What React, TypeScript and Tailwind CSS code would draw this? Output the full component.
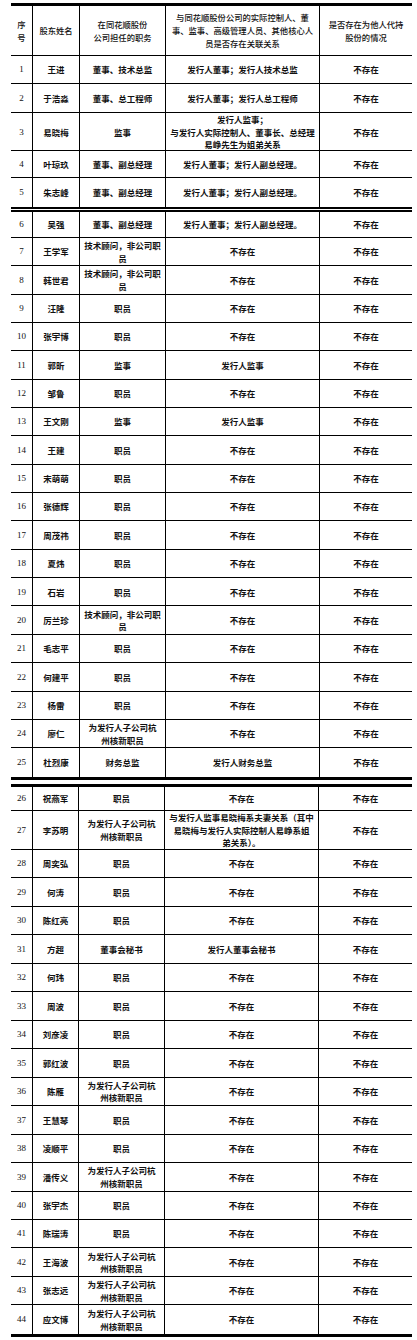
const rowsA = [
  { n: "1", name: "王进", post: "董事、技术总监", rel: "发行人董事；发行人技术总监", h: "h-[28px]" },
  { n: "2", name: "于浩淼", post: "董事、总工程师", rel: "发行人董事；发行人总工程师", h: "h-[29px]" },
  {
    n: "3",
    name: "易晓梅",
    post: "监事",
    rel: "发行人监事；\n与发行人实际控制人、董事长、总经理\n易峥先生为姐弟关系",
    h: "h-[38px]",
  },
  { n: "4", name: "叶琼玖", post: "董事、副总经理", rel: "发行人董事；发行人副总经理。", h: "h-[27px]" },
  { n: "5", name: "朱志峰", post: "董事、副总经理", rel: "发行人董事；发行人副总经理。", h: "h-[29px]" },
];

const guwen = "技术顾问，非公司职\n员";
const hexin = "为发行人子公司杭\n州核新职员";

const rowsB = [
  { n: "6", name: "吴强", post: "董事、副总经理", rel: "发行人董事；发行人副总经理。" },
  { n: "7", name: "王学军", post: guwen, rel: "不存在" },
  { n: "8", name: "韩世君", post: guwen, rel: "不存在" },
  { n: "9", name: "汪隆", post: "职员", rel: "不存在" },
  { n: "10", name: "张宇博", post: "职员", rel: "不存在" },
  { n: "11", name: "郭昕", post: "监事", rel: "发行人监事" },
  { n: "12", name: "邹鲁", post: "职员", rel: "不存在" },
  { n: "13", name: "王文刚", post: "监事", rel: "发行人监事" },
  { n: "14", name: "王建", post: "职员", rel: "不存在" },
  { n: "15", name: "宋萌萌", post: "职员", rel: "不存在" },
  { n: "16", name: "张德辉", post: "职员", rel: "不存在" },
  { n: "17", name: "周茂祎", post: "职员", rel: "不存在" },
  { n: "18", name: "夏炜", post: "职员", rel: "不存在" },
  { n: "19", name: "石岩", post: "职员", rel: "不存在" },
  { n: "20", name: "厉兰珍", post: guwen, rel: "不存在" },
  { n: "21", name: "毛志平", post: "职员", rel: "不存在" },
  { n: "22", name: "何建平", post: "职员", rel: "不存在" },
  { n: "23", name: "杨雷", post: "职员", rel: "不存在" },
  { n: "24", name: "廖仁", post: hexin, rel: "不存在" },
  { n: "25", name: "杜烈康", post: "财务总监", rel: "发行人财务总监" },
];

const rowsC = [
  { n: "26", name: "祝燕军", post: "职员", rel: "不存在" },
  {
    n: "27",
    name: "李苏明",
    post: hexin,
    rel: "与发行人监事易晓梅系夫妻关系（其中\n易晓梅与发行人实际控制人易峥系姐\n弟关系）。",
  },
  { n: "28", name: "周奕弘", post: "职员", rel: "不存在" },
  { n: "29", name: "何涛", post: "职员", rel: "不存在" },
  { n: "30", name: "陈红亮", post: "职员", rel: "不存在" },
  { n: "31", name: "方超", post: "董事会秘书", rel: "发行人董事会秘书" },
  { n: "32", name: "何玮", post: "职员", rel: "不存在" },
  { n: "33", name: "周波", post: "职员", rel: "不存在" },
  { n: "34", name: "刘彦凌", post: "职员", rel: "不存在" },
  { n: "35", name: "郭红波", post: "职员", rel: "不存在" },
  { n: "36", name: "陈雁", post: hexin, rel: "不存在" },
  { n: "37", name: "王慧琴", post: "职员", rel: "不存在" },
  { n: "38", name: "凌顺平", post: "职员", rel: "不存在" },
  { n: "39", name: "潘传义", post: hexin, rel: "不存在" },
  { n: "40", name: "张宇杰", post: "职员", rel: "不存在" },
  { n: "41", name: "陈瑞涛", post: "职员", rel: "不存在" },
  { n: "42", name: "王海波", post: hexin, rel: "不存在" },
  { n: "43", name: "张志远", post: hexin, rel: "不存在" },
  { n: "44", name: "应文博", post: hexin, rel: "不存在" },
];

const cell = "flex items-center justify-center text-center whitespace-pre-line border-r border-black";

type RowProps = {
  n: string;
  name: string;
  post: string;
  rel: string;
  h: string;
  cols: string;
  last?: boolean;
};

const Row = ({ n, name, post, rel, h, cols, last }: RowProps) => (
  <div className={`grid ${cols} ${h} ${last ? "" : "border-b border-black"}`}>
    <div className={`${cell} font-['Liberation_Serif',serif] text-[9px] font-normal`}>{n}</div>
    <div className={cell}>{name}</div>
    <div className={cell}>{post}</div>
    <div className={cell}>{rel}</div>
    <div className="flex items-center justify-center text-center">不存在</div>
  </div>
);

const colsAB = "grid-cols-[22px_47px_86px_154px_92px]";
const colsC = "grid-cols-[22px_46px_86px_154px_93px]";

export default function App() {
  return (
    <div className="min-h-[1340px] w-[417px] bg-white pt-[3px] font-['Noto_Sans_CJK_SC',sans-serif] text-[8.5px] font-semibold leading-[12.6px] text-[#111]">
      <div className="ml-[11px] w-[401px]">
        {/* first page */}
        <div className="border-t-[3px] border-black">
          <div className={`grid ${colsAB} h-[50px] border-b border-black text-[8.3px] font-medium leading-[13px]`}>
            <div className={cell}>{"序\n号"}</div>
            <div className={cell}>股东姓名</div>
            <div className={cell}>{"在同花顺股份\n公司担任的职务"}</div>
            <div className={cell}>
              {"与同花顺股份公司的实际控制人、董\n事、监事、高级管理人员、其他核心人\n员是否存在关联关系"}
            </div>
            <div className="flex items-center justify-center text-center whitespace-pre-line">
              {"是否存在为他人代持\n股份的情况"}
            </div>
          </div>
          {rowsA.map((r, i) => (
            <Row key={r.n} {...r} cols={colsAB} last={i === rowsA.length - 1} />
          ))}
        </div>
        <div className="h-[5px] border-t-2 border-b-2 border-black" />

        {/* second page */}
        <div className="border-b-[3px] border-black">
          {rowsB.map((r, i) => (
            <Row
              key={r.n}
              {...r}
              h={i === 0 ? "h-[26px]" : "h-[28.35px]"}
              cols={colsAB}
              last={i === rowsB.length - 1}
            />
          ))}
        </div>

        {/* third page */}
        <div className="mt-[4px] border-t-[3px] border-b-[3px] border-black">
          {rowsC.map((r, i) => (
            <Row
              key={r.n}
              {...r}
              h={i === 0 ? "h-[24.4px]" : i === 1 ? "h-[39px]" : "h-[28.47px]"}
              cols={colsC}
              last={i === rowsC.length - 1}
            />
          ))}
        </div>
      </div>
    </div>
  );
}
